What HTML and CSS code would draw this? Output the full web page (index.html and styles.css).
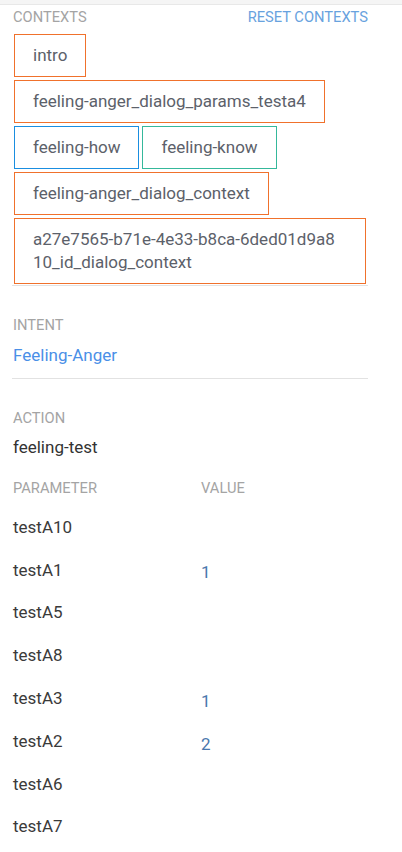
FILE: index.html
```html
<!DOCTYPE html>
<html>
<head>
<meta charset="utf-8">
<link rel="stylesheet" href="styles.css">
</head>
<body>
<div class="topband"></div>
<main class="panel">
  <section class="contexts">
    <div class="head-row">
      <span class="label">CONTEXTS</span>
      <span class="reset">RESET CONTEXTS</span>
    </div>
    <div class="chips">
      <span class="chip">intro</span>
      <span class="chip">feeling-anger_dialog_params_testa4</span>
      <span class="chip blue">feeling-how</span>
      <span class="chip teal">feeling-know</span>
      <span class="chip">feeling-anger_dialog_context</span>
      <span class="chip long">a27e7565-b71e-4e33-b8ca-6ded01d9a810_id_dialog_context</span>
    </div>
  </section>

  <section class="intent">
    <div class="label">INTENT</div>
    <div class="intent-name">Feeling-Anger</div>
  </section>

  <section class="action">
    <div class="label">ACTION</div>
    <div class="action-name">feeling-test</div>
    <div class="param-head">
      <span class="label col-param">PARAMETER</span>
      <span class="label col-value">VALUE</span>
    </div>
    <div class="param-row"><span class="col-param">testA10</span><span class="col-value"></span></div>
    <div class="param-row"><span class="col-param">testA1</span><span class="col-value">1</span></div>
    <div class="param-row"><span class="col-param">testA5</span><span class="col-value"></span></div>
    <div class="param-row"><span class="col-param">testA8</span><span class="col-value"></span></div>
    <div class="param-row"><span class="col-param">testA3</span><span class="col-value">1</span></div>
    <div class="param-row"><span class="col-param">testA2</span><span class="col-value">2</span></div>
    <div class="param-row"><span class="col-param">testA6</span><span class="col-value"></span></div>
    <div class="param-row"><span class="col-param">testA7</span><span class="col-value"></span></div>
  </section>
</main>
</body>
</html>
```

FILE: styles.css
```css
html, body {
  margin: 0;
  padding: 0;
  background: #ffffff;
}
body {
  font-family: Roboto, "Liberation Sans", Arial, sans-serif;
  color: #333;
}
.topband {
  height: 4px;
  background: #f5f5f5;
  border-bottom: 1px solid #e8e8e8;
}
.panel {
  width: 356px;
  margin-left: 12px;
}
.label {
  font-size: 14.7px;
  line-height: 20px;
  color: #a4a4a4;
  text-transform: uppercase;
}
.head-row {
  display: flex;
  justify-content: space-between;
  margin-top: 1.5px;
  padding-left: 1px;
}
.reset {
  font-size: 14.7px;
  line-height: 20px;
  color: #68a2de;
}
.contexts {
  border-bottom: 1px solid #e2e2e2;
  padding-bottom: 1px;
}
.chips {
  display: flex;
  flex-wrap: wrap;
  gap: 3px;
  padding: 7.6px 2px 0 2px;
}
.chip {
  display: block;
  max-width: 352px;
  box-sizing: border-box;
  border: 1px solid #f0712c;
  padding: 9px 18px;
  font-size: 17px;
  line-height: 23px;
  color: #5c616a;
  word-break: break-all;
}
.chip.long {
  width: 352px;
  padding-right: 23px;
}
.chip.blue { border-color: #1a8ee0; }
.chip.teal { border-color: #35b89b; }

.intent {
  padding-top: 28.7px;
  padding-left: 1px;
  padding-bottom: 11.5px;
  border-bottom: 1px solid #e2e2e2;
}
.intent-name {
  margin-top: 8.8px;
  font-size: 17px;
  line-height: 23px;
  color: #4a8fe7;
}
.action {
  padding-top: 29px;
  padding-left: 1px;
}
.action-name {
  margin-top: 8.3px;
  font-size: 17px;
  line-height: 23px;
  color: #333;
}
.param-head {
  display: flex;
  margin-top: 18.7px;
  margin-bottom: 17.8px;
}
.param-row {
  display: flex;
  height: 42.8px;
  font-size: 17px;
  line-height: 23px;
  color: #3a3a3a;
}
.col-param {
  width: 188px;
  flex: none;
}
.col-value {
  padding-top: 2.7px;
  color: #4a78ad;
}
.param-head .col-value {
  padding-top: 0;
  color: #a4a4a4;
}
```
